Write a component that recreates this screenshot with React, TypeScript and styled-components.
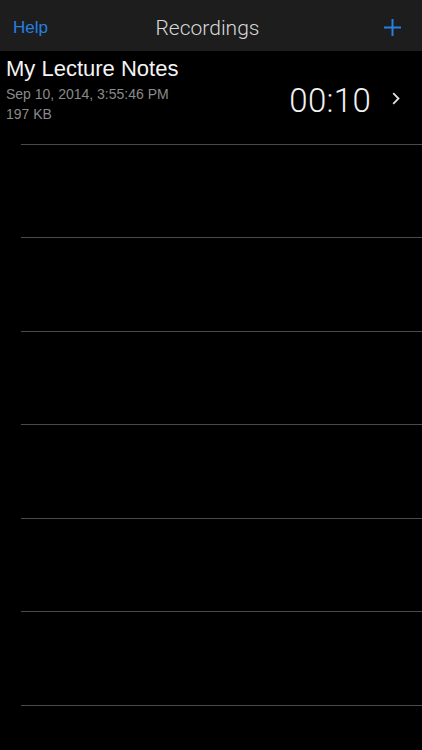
import styled, { createGlobalStyle } from 'styled-components';

const GlobalStyle = createGlobalStyle`
  html, body {
    margin: 0;
    padding: 0;
    background: #000;
  }
  body {
    font-family: "Liberation Sans", Arial, sans-serif;
    -webkit-font-smoothing: antialiased;
  }
`;

const Screen = styled.div`
  width: 422px;
  height: 750px;
  background: #000;
  overflow: hidden;
  display: flex;
  flex-direction: column;
`;

const NavBar = styled.div`
  height: 51px;
  background: #1d1d1d;
  display: grid;
  grid-template-columns: 1fr auto 1fr;
  align-items: center;
  padding: 0 20px 0 13px;
  flex-shrink: 0;
`;

const NavButton = styled.button`
  background: none;
  border: none;
  padding: 0;
  color: #2580e2;
  font-family: "Liberation Sans", Arial, sans-serif;
  font-size: 17px;
  justify-self: start;
  margin-top: 4px;
  cursor: pointer;
`;

const AddButton = styled(NavButton)`
  justify-self: end;
  display: flex;
  margin-top: 4px;
`;

const NavTitle = styled.div`
  color: #d8d8d8;
  font-family: Roboto, "Liberation Sans", sans-serif;
  font-weight: 300;
  font-size: 21px;
  margin-top: 4px;
`;

const List = styled.div`
  display: flex;
  flex-direction: column;
`;

const Row = styled.div`
  height: 92.5px;
  display: flex;
  align-items: flex-start;
  padding: 5px 22px 0 6px;
  box-sizing: border-box;
`;

const Separator = styled.div`
  height: 1px;
  margin-left: 21px;
  background: #4a4a4a;
`;

const Info = styled.div`
  flex: 1;
  display: flex;
  flex-direction: column;
`;

const Name = styled.div`
  color: #f4f4f4;
  font-family: "Liberation Sans", Arial, sans-serif;
  font-size: 22px;
  line-height: 25px;
`;

const Meta = styled.div<{ $first?: boolean }>`
  color: #8a8a8a;
  font-size: 14px;
  line-height: 20px;
  margin-top: ${(p) => (p.$first ? '3px' : '0')};
`;

const Duration = styled.div`
  color: #f2f2f2;
  font-family: Roboto, "Liberation Sans", sans-serif;
  font-weight: 300;
  font-size: 33px;
  margin-top: 25px;
  margin-right: 21px;
  letter-spacing: 0.3px;
`;

const Chevron = styled.div`
  margin-top: 36px;
  display: flex;
`;

function PlusIcon() {
  return (
    <svg width="19" height="19" viewBox="0 0 19 19">
      <path d="M9.5 1v17M1 9.5h17" stroke="#2580e2" strokeWidth="2" fill="none" />
    </svg>
  );
}

function ChevronIcon() {
  return (
    <svg width="8" height="13" viewBox="0 0 8 13">
      <path d="M1.2 1.2l5.3 5.3-5.3 5.3" stroke="#e0e0e0" strokeWidth="1.8" fill="none" />
    </svg>
  );
}

const emptyRows = [1, 2, 3, 4, 5, 6];

export default function App() {
  return (
    <Screen>
      <GlobalStyle />
      <NavBar>
        <NavButton>Help</NavButton>
        <NavTitle>Recordings</NavTitle>
        <AddButton aria-label="Add">
          <PlusIcon />
        </AddButton>
      </NavBar>
      <List>
        <Row>
          <Info>
            <Name>My Lecture Notes</Name>
            <Meta $first>Sep 10, 2014, 3:55:46 PM</Meta>
            <Meta>197 KB</Meta>
          </Info>
          <Duration>00:10</Duration>
          <Chevron>
            <ChevronIcon />
          </Chevron>
        </Row>
        <Separator />
        {emptyRows.map((n) => (
          <div key={n}>
            <Row />
            <Separator />
          </div>
        ))}
      </List>
    </Screen>
  );
}
